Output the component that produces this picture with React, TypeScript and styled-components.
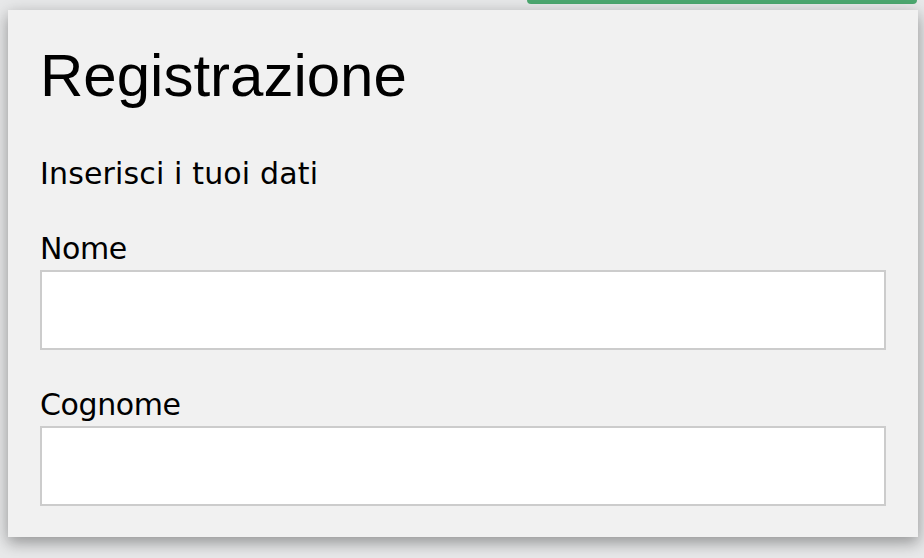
import React from "react";
import styled, { createGlobalStyle } from "styled-components";

const GlobalStyle = createGlobalStyle`
  html, body {
    margin: 0;
    padding: 0;
    background: #e8e9ea;
  }
  body {
    font-family: "DejaVu Sans", Verdana, sans-serif;
    color: #000;
    overflow: hidden;
  }
  * { box-sizing: border-box; }
`;

const Page = styled.div`
  width: 924px;
  height: 558px;
  display: flex;
  flex-direction: column;
`;

const TopStrip = styled.div`
  height: 4px;
  display: flex;
  padding-left: 527px;
`;

const GreenButton = styled.div`
  width: 390px;
  height: 4px;
  background: #4ca870;
  border-radius: 0 0 7px 7px;
`;

const Card = styled.form`
  margin: 6px 0 0 8px;
  width: 910px;
  background: #f1f1f1;
  padding: 31px 32px 31px;
  box-shadow: 0 6px 12px 0 rgba(0, 0, 0, 0.22), 0 4px 20px 0 rgba(0, 0, 0, 0.19);
  display: flex;
  flex-direction: column;
`;

const Title = styled.h1`
  margin: 0;
  font-family: "Liberation Sans", Arial, sans-serif;
  font-weight: 400;
  font-size: 60px;
  line-height: 69px;
`;

const Subtitle = styled.p`
  margin: 46px 0 0;
  font-size: 30px;
  line-height: 35px;
  letter-spacing: 0.15px;
`;

const Label = styled.label<{ $gap: number }>`
  display: block;
  margin-top: ${(p) => p.$gap}px;
  font-size: 30px;
  line-height: 35px;
  letter-spacing: -0.4px;
`;

const Input = styled.input`
  display: block;
  margin-top: 4px;
  width: 846px;
  height: 80px;
  border: 2px solid #cccccc;
  background: #fff;
  padding: 16px;
  font-size: 30px;
  font-family: "DejaVu Sans", Verdana, sans-serif;
  outline: none;
`;

export default function App() {
  return (
    <>
      <GlobalStyle />
      <Page>
        <TopStrip>
          <GreenButton />
        </TopStrip>
        <Card onSubmit={(e) => e.preventDefault()}>
          <Title>Registrazione</Title>
          <Subtitle>Inserisci i tuoi dati</Subtitle>
          <Label $gap={40} htmlFor="nome">Nome</Label>
          <Input id="nome" type="text" />
          <Label $gap={37} htmlFor="cognome">Cognome</Label>
          <Input id="cognome" type="text" />
        </Card>
      </Page>
    </>
  );
}
